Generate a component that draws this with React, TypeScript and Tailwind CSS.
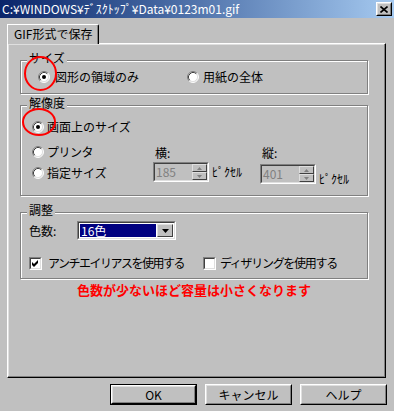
import type { ReactNode } from 'react';

// Win2000 style "save as GIF" dialog
const FONT = "font-['Noto_Sans_CJK_JP','Liberation_Sans',sans-serif]";

function Radio({ checked }: { checked?: boolean }) {
  return (
    <svg width="12" height="12" viewBox="0 0 12 12" className="shrink-0">
      <circle cx="6" cy="6" r="5" fill="#ffffff" />
      <path d="M2.11 9.89 A5.5 5.5 0 0 1 9.89 2.11" fill="none" stroke="#808080" strokeWidth="1" />
      <path d="M9.89 2.11 A5.5 5.5 0 0 1 2.11 9.89" fill="none" stroke="#ffffff" strokeWidth="1" />
      <path d="M2.82 9.18 A4.5 4.5 0 0 1 9.18 2.82" fill="none" stroke="#404040" strokeWidth="1" />
      <path d="M9.18 2.82 A4.5 4.5 0 0 1 2.82 9.18" fill="none" stroke="#dfdfdf" strokeWidth="1" />
      {checked && <circle cx="6" cy="6" r="2" fill="#000000" />}
    </svg>
  );
}

function Check({ checked }: { checked?: boolean }) {
  return (
    <div className="w-[13px] h-[13px] shrink-0 border border-t-[#808080] border-l-[#808080] border-r-white border-b-white">
      <div className="w-full h-full border border-t-[#404040] border-l-[#404040] border-r-[#dfdfdf] border-b-[#dfdfdf] bg-white flex items-center justify-center">
        {checked && (
          <svg width="7" height="7" viewBox="0 0 7 7">
            <path d="M0 2 L2 4 L6 0 L6 3 L2 7 L0 5 Z" fill="#000000" />
          </svg>
        )}
      </div>
    </div>
  );
}

function Group({ label, labelTop, className, children }: { label: string; labelTop: string; className: string; children: ReactNode }) {
  return (
    <div className={`relative border border-[#808080] shadow-[inset_1px_1px_0_#ffffff,1px_1px_0_#ffffff] ${className}`}>
      <span className={`absolute left-[6px] px-[2px] bg-[#c0c0c0] leading-[14px] ${labelTop}`}>{label}</span>
      {children}
    </div>
  );
}

function Spin() {
  return (
    <div className="w-[15px] h-full flex flex-col">
      {[0, 1].map((i) => (
        <div key={i} className="flex-1 border border-t-[#dfdfdf] border-l-[#dfdfdf] border-r-[#404040] border-b-[#404040] bg-[#c0c0c0] flex items-center justify-center">
          <svg width="5" height="3" viewBox="0 0 5 3">
            {i === 0 ? <path d="M0 3 L2.5 0 L5 3 Z" fill="#808080" /> : <path d="M0 0 L5 0 L2.5 3 Z" fill="#808080" />}
          </svg>
        </div>
      ))}
    </div>
  );
}

function SizeField({ label, value, unitClass }: { label: string; value: string; unitClass: string }) {
  return (
    <div className="w-[107px] flex flex-col">
      <span className="pl-[2px] leading-[14px]">{label}</span>
      <div className="mt-[2px] flex items-center gap-[3px]">
        <div className="w-[56px] h-[20px] border border-t-[#808080] border-l-[#808080] border-r-white border-b-white">
          <div className="w-full h-full border border-t-[#404040] border-l-[#404040] border-r-[#dfdfdf] border-b-[#dfdfdf] flex items-center">
            <span className="flex-1 pl-[1px] text-[#808080] leading-[14px]">{value}</span>
            <Spin />
          </div>
        </div>
        <span className={`leading-[14px] whitespace-nowrap ${unitClass}`}>ﾋﾟｸｾﾙ</span>
      </div>
    </div>
  );
}

function Button({ label, isDefault }: { label: string; isDefault?: boolean }) {
  return (
    <div className={`w-[87px] h-[21px] ${isDefault ? 'border border-black' : ''}`}>
      <div className="w-full h-full border border-t-white border-l-white border-r-black border-b-black">
        <div className="w-full h-full border border-t-[#dfdfdf] border-l-[#dfdfdf] border-r-[#808080] border-b-[#808080] flex items-center justify-center leading-[14px]">
          {label}
        </div>
      </div>
    </div>
  );
}

export default function App() {
  return (
    <div className={`relative w-[394px] h-[411px] bg-[#c0c0c0] text-black text-[12px] flex flex-col overflow-hidden ${FONT}`}>
      {/* title bar */}
      <div className="h-[18px] bg-gradient-to-r from-[#0a246a] to-[#a6caf0] flex items-center justify-between pl-[2px] pr-[2px]">
        <span className="text-white leading-[14px]">C:¥WINDOWS¥ﾃﾞｽｸﾄｯﾌﾟ¥Data¥0123m01.gif</span>
        <div className="w-[16px] h-[14px] border border-t-white border-l-white border-r-black border-b-black">
          <div className="w-full h-full border border-t-[#dfdfdf] border-l-[#dfdfdf] border-r-[#808080] border-b-[#808080] bg-[#c0c0c0] flex items-center justify-center">
            <svg width="8" height="7" viewBox="0 0 8 7">
              <path d="M0.5 0.5 L7.5 6.5 M7.5 0.5 L0.5 6.5" stroke="#000000" strokeWidth="1.6" />
            </svg>
          </div>
        </div>
      </div>

      <div className="px-[7px] pt-[6px] flex flex-col">
        {/* tab */}
        <div className="relative z-10 -mb-px w-[92px] h-[20px] bg-[#c0c0c0] border-t border-l border-r border-t-white border-l-white border-r-black rounded-tr-[2px] shadow-[inset_-1px_0_0_#808080] flex items-center pl-[6px] pb-[2px] leading-[14px]">
          GIF形式で保存
        </div>

        {/* panel */}
        <div className="w-[379px] h-[335px] border border-t-white border-l-white border-r-black border-b-black shadow-[inset_-1px_-1px_0_#808080,inset_1px_1px_0_#dfdfdf] pt-[16px] pl-[12px] pr-[17px] flex flex-col">
          <Group label="サイズ" labelTop="-top-[10px]" className="h-[34px] flex items-center pl-[17px]">
            <div className="w-[149px] flex items-center gap-[5px] leading-[16px]">
              <Radio checked />
              <span>図形の領域のみ</span>
            </div>
            <div className="flex items-center gap-[4px] leading-[16px]">
              <Radio />
              <span>用紙の全体</span>
            </div>
          </Group>

          <Group label="解像度" labelTop="-top-[10px]" className="mt-[11px] h-[91px] flex pl-[11px]">
            <div className="w-[121px] flex flex-col pt-[13px] leading-[16px]">
              <div className="flex items-center gap-[3px]">
                <Radio checked />
                <span>画面上のサイズ</span>
              </div>
              <div className="mt-[9px] flex items-center gap-[3px]">
                <Radio />
                <span className="tracking-[-0.5px]">プリンタ</span>
              </div>
              <div className="mt-[5px] flex items-center gap-[3px]">
                <Radio />
                <span>指定サイズ</span>
              </div>
            </div>
            <div className="self-end mb-[9px] flex">
              <SizeField label="横:" value="185" unitClass="" />
              <SizeField label="縦:" value="401" unitClass="mt-[10px]" />
            </div>
          </Group>

          <Group label="調整" labelTop="-top-[10px]" className="mt-[16px] h-[67px] flex flex-col pl-[8px]">
            <div className="mt-[8px] flex items-center">
              <span className="w-[48px] leading-[14px]">色数:</span>
              <div className="w-[99px] h-[19px] border border-t-[#808080] border-l-[#808080] border-r-white border-b-white">
                <div className="w-full h-full border border-t-[#404040] border-l-[#404040] border-r-[#dfdfdf] border-b-[#dfdfdf] bg-white flex p-[1px] gap-[1px]">
                  <div className="flex-1 bg-[#000080] text-white flex items-center pl-[1px] leading-[14px]">16色</div>
                  <div className="w-[16px] border border-t-[#dfdfdf] border-l-[#dfdfdf] border-r-[#404040] border-b-[#404040] bg-[#c0c0c0] flex items-center justify-center">
                    <svg width="7" height="4" viewBox="0 0 7 4">
                      <path d="M0 0 L7 0 L3.5 4 Z" fill="#000000" />
                    </svg>
                  </div>
                </div>
              </div>
            </div>
            <div className="mt-[15px] flex items-center leading-[16px] whitespace-nowrap">
              <div className="w-[174px] shrink-0 flex items-center gap-[6px]">
                <Check checked />
                <span className="tracking-[-1.5px]">アンチエイリアスを使用する</span>
              </div>
              <div className="flex items-center gap-[4px]">
                <Check />
                <span className="tracking-[-1.3px]">ディザリングを使用する</span>
              </div>
            </div>
          </Group>

          <p className="mt-[3px] text-center text-[13px] font-bold text-[#ff0000] leading-[16px]">
            色数が少ないほど容量は小さくなります
          </p>
        </div>

        {/* buttons */}
        <div className="mt-[6px] flex justify-end gap-[8px]">
          <Button label="OK" isDefault />
          <Button label="キャンセル" />
          <Button label="ヘルプ" />
        </div>
      </div>

      {/* red annotation circles */}
      <svg className="absolute left-[24px] top-[56px] pointer-events-none" width="33" height="35" viewBox="0 0 33 35">
        <ellipse cx="16.5" cy="17.5" rx="15.5" ry="16.5" fill="none" stroke="#ff0000" strokeWidth="2" />
      </svg>
      <svg className="absolute left-[22px] top-[108px] pointer-events-none" width="34" height="28" viewBox="0 0 34 28">
        <ellipse cx="17" cy="14" rx="16" ry="13" fill="none" stroke="#ff0000" strokeWidth="2" />
      </svg>
    </div>
  );
}
